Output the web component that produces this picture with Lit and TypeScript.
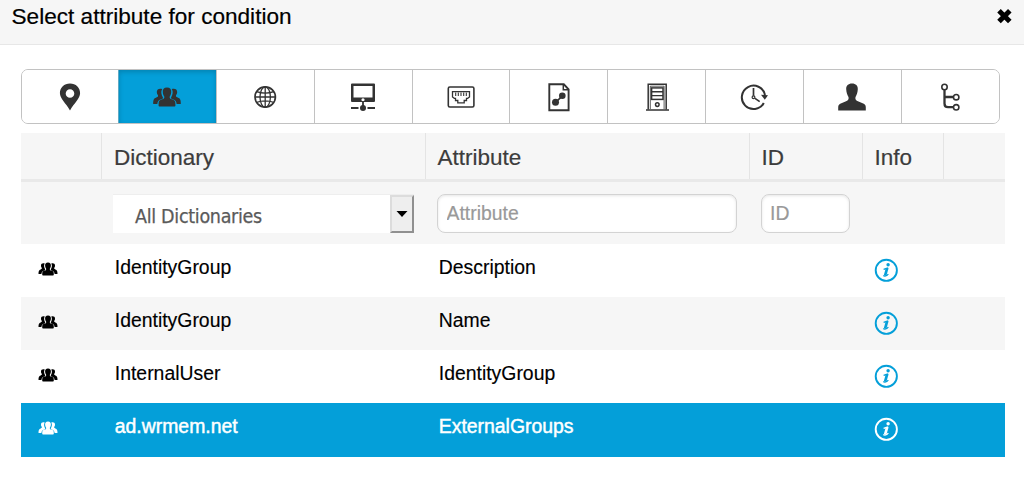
import { LitElement, html, css, svg } from "lit";
import { customElement, property, state } from "lit/decorators.js";

const GROUP = svg`
  <path d="M11.200 8C8.500 7 5.700 8 5.800 11.100c.1 1.600.5 2.400 1.200 3.200.3 1.200-.2 1.700-1.700 2.300-2.500 1-3.100 2.200-3.100 6.500h4.200c.2-2.900 1.300-4.100 4.600-5.100.9-.3 1.200-.9.8-1.700-1.500-2.700-2.200-5.700-.6-8.300z"/>
  <path d="M20.800 8c2.700-1 5.500 0 5.400 3.100-.1 1.600-.5 2.400-1.200 3.200-.3 1.200.2 1.700 1.700 2.300 2.500 1 3.100 2.200 3.100 6.500h-4.200c-.2-2.900-1.300-4.100-4.600-5.100-.9-.3-1.200-.9-.8-1.700 1.500-2.700 2.200-5.700.6-8.300z"/>
  <path d="M16 6.500c3.100 0 4.500 1.900 4.200 4.800-.2 2.100-.7 3.200-1.500 4.200-.3 1.700.3 2.300 2.200 2.800 2.700.8 3.500 1.800 3.500 4.700v1.400c0 .7-.4 1.100-1.100 1.100H8.700c-.7 0-1.100-.4-1.100-1.100V23c0-2.900.8-3.900 3.500-4.700 1.900-.5 2.500-1.100 2.200-2.800-.8-1-1.300-2.100-1.500-4.200-.3-2.900 1.100-4.800 4.200-4.800z"/>`;

const ICONS: Record<string, unknown> = {
  location: svg`<path fill-rule="evenodd" d="M16 2.500c5.800 0 10.100 4.200 10.100 9.600 0 5.800-5.900 9.900-10.100 17.400C11.800 22 5.900 17.900 5.900 12.100 5.900 6.700 10.200 2.500 16 2.500zm0 5.700a4.300 4.300 0 1 0 0 8.600 4.300 4.300 0 0 0 0-8.600z"/>`,
  group: GROUP,
  globe: svg`<g transform="translate(.6 0)" fill="none" stroke="currentColor" stroke-width="1.300">
    <circle cx="15.600" cy="16" r="10.200" stroke-width="1.700"/><ellipse cx="15.600" cy="16" rx="5.200" ry="10.200"/>
    <path d="M15.600 6v20M5.500 16h20.200M7 10.700c5 1.700 12.200 1.700 17.200 0M7 21.300c5-1.700 12.200-1.700 17.200 0"/></g>`,
  network: svg`<path fill-rule="evenodd" d="M5 2.500h22a1 1 0 0 1 1 1v16.500a1 1 0 0 1-1 1H5a1 1 0 0 1-1-1V3.500a1 1 0 0 1 1-1zM6.500 5v11.500h19V5z"/>
    <circle cx="16" cy="18.800" r="1.600" fill="#fff"/><path d="M15.100 20h1.800v5h-1.800zM4 26h7.500v1.900H4zM20.500 26H28v1.900h-7.500z"/><circle cx="16" cy="26.900" r="3"/>`,
  port: svg`<g fill="none" stroke="currentColor"><rect x="3.300" y="6" width="25.600" height="20" rx="1.500" stroke-width="1.600"/>
    <path stroke-width="1.300" d="M7.500 10.700h17v5.300l-1.800 1.300h-1.200v2.200h-2.300v2.300h-6.400v-2.300h-2.300v-2.200H9.300L7.500 16z"/><path stroke-width="1.100" d="M10.700 11.500v3.500M13.300 11.500v3.500M16 11.500v3.500M18.700 11.500v3.500M21.300 11.500v3.500"/></g>`,
  document: svg`<path fill="none" stroke="currentColor" stroke-width="1.900" d="M6.300 3.300h14.500l4.800 5v21H6.300z"/>
    <path fill="none" stroke="currentColor" stroke-width="1.500" d="M20.300 3.500v5.300h5.300"/><path stroke="currentColor" stroke-width="1.600" d="M12.500 21.300l7-6.500"/><circle cx="12.500" cy="21.300" r="3.500"/><circle cx="19.300" cy="14.700" r="3.300"/>`,
  server: svg`<g fill="none" stroke="currentColor"><path stroke-width="1.500" d="M7.200 28.500V3.300h18v25.200"/><path stroke-width=".8" d="M9.300 28V5.200h13.800V28"/>
    <rect x="10.600" y="6.900" width="11.400" height="11.500" stroke-width="1.500"/><path stroke-width="1.400" d="M10.500 10.700h11.500M10.500 14.600h11.500M5 29h23"/><circle cx="16.300" cy="23.600" r="1.800" stroke-width="1.500"/></g>`,
  clock: svg`<g fill="none" stroke="currentColor" stroke-width="2"><path d="M27 14A11.700 11.700 0 1 0 25.800 22"/><path stroke-width="1.700" d="M15.500 7v7.800M17 17.400l4.700 3.200"/><circle cx="15.500" cy="16.200" r="1.400" stroke-width="1.200"/></g>
    <path d="M23 13.700l7 .5-3.200 4.600z"/>`,
  user: svg`<path d="M16 2.500c3.800 0 6 2.200 5.800 5.800-.2 3.500-1.200 6.200-2.300 7.700-.5 2.500.3 3.400 3 4.600l5.300 2.200c1.500.7 2 2 2 3.600v3.200H2.200v-3.200c0-1.600.5-2.900 2-3.600l5.300-2.200c2.700-1.200 3.500-2.100 3-4.600-1.100-1.500-2.100-4.200-2.300-7.700-.2-3.600 2-5.800 5.800-5.800z"/>`,
  tree: svg`<g fill="none" stroke="currentColor" stroke-width="2"><path stroke-width="2.300" d="M10.500 9v13.500c0 2.500 1 3.700 3.500 3.700h5.500M10.500 16h9"/>
    <g fill="#fff" stroke-width="1.600"><circle cx="10.500" cy="6" r="2.700"/><circle cx="22.200" cy="16.200" r="2.700"/><circle cx="22.200" cy="26.300" r="2.700"/></g></g>`,
};

interface AttributeRow {
  dictionary: string;
  attribute: string;
}

@customElement("glyph-icon")
export class GlyphIcon extends LitElement {
  static styles = css`
    :host { display: block; width: 32px; height: 32px; flex: none; }
    svg { display: block; width: 100%; height: 100%; fill: currentColor; }
  `;
  @property() name = "group";
  render() {
    return html`<svg viewBox="0 0 32 32" aria-hidden="true">${ICONS[this.name]}</svg>`;
  }
}

@customElement("app-root")
export class AppRoot extends LitElement {
  static styles = css`
    :host { display: block; width: 1024px; height: 501px; overflow: hidden; background: #fff; color: #000; font-family: "Liberation Sans", Arial, sans-serif; }
    * { box-sizing: border-box; }
    .top { display: flex; justify-content: space-between; height: 45px; padding: 0 11px 0 11.500px; background: #f6f6f6; border-bottom: 1px solid #e7e7e7; }
    h1 { margin: 4px 0 0; font-size: 22.600px; line-height: 26px; font-weight: 400; -webkit-text-stroke: .2px currentColor; }
    .close { width: 17px; height: 17px; margin-top: 8px; padding: 0; border: 0; background: none; }
    .close svg { display: block; }
    .tabs { display: grid; grid-template-columns: 96px repeat(8, 97.850px) 1fr; width: 979px; height: 55px; margin: 24.400px 0 0 21px; border: 1px solid #c2c2c2; border-radius: 7px; overflow: hidden; }
    .tab { display: flex; align-items: center; justify-content: center; border: 0; border-left: 1px solid #c2c2c2; background: #fff; color: #333; padding: 0; }
    .tab:first-child { border-left: 0; }
    .tab.active { background: #049fd9; box-shadow: inset 0 2px 5px rgba(0, 0, 0, .18); border-color: #5fa9c4; }
    .table { width: 984px; margin: 8.600px 0 0 21px; }
    .row { display: grid; grid-template-columns: 80px 324px 324px 113px 81px 62px; height: 53px; font-size: 19.400px; line-height: 24px; }
    .head { height: 49px; background: #f6f6f6; border-bottom: 3px solid #e9e9e9; color: #3c3c3c; font-size: 22.500px; -webkit-text-stroke: .2px currentColor; }
    .head > div { padding: 13px 0 0 11.400px; border-left: 1px solid #e4e4e4; }
    .head > div:first-child { border: 0; }
    .head > .dictionary { padding-left: 12px; }
    .filters { height: 62px; background: #f6f6f6; }
    .filters > div { padding: 12px 12px 0 12px; }
    .filters > .id { padding: 12px 12px 0 11.500px; }
    .select { display: flex; width: 301px; height: 39px; background: #fff; border-top: 1px solid #eee; color: #5a5a5a; font: 19.500px/41px "DejaVu Sans Condensed", "DejaVu Sans", sans-serif; font-stretch: condensed; letter-spacing: -.3px; -webkit-text-stroke: .25px currentColor; }
    .label { flex: 1; padding: 1px 0 0 22px; }
    .drop { display: flex; align-items: center; justify-content: center; width: 24px; height: 38px; background: #eee; border: 2px solid; border-color: #dcdcdc #909090 #909090 #dcdcdc; }
    .field { display: block; width: 100%; height: 39px; padding: 1px 8.500px 0; border: 1px solid #d3d3d3; border-radius: 8px; background: #fff; box-shadow: inset 0 1px 3px rgba(0, 0, 0, .1); font: 19.400px "Liberation Sans", Arial, sans-serif; outline: 0; }
    .field::placeholder { color: #999; opacity: 1; -webkit-text-stroke: .2px #999; }
    .data { -webkit-text-stroke: .15px currentColor; }
    .data:nth-child(even) { background: #f6f6f6; }
    .data.selected { background: #049fd9; color: #fff; height: 54px; -webkit-text-stroke: .45px currentColor; }
    .data > div { padding: 11px 0 0 13.800px; }
    .data > .kind { padding: 14px 0 0 15.500px; }
    .kind glyph-icon { width: 22px; height: 22px; }
    .data > .info { padding: 14px 0 0 12px; color: #049fd9; }
    .selected > .info { color: #fff; }
    .info svg { display: block; }
  `;

  @state() private activeTab = "group";
  @state() private selected = 3;
  private rows: AttributeRow[] = [
    { dictionary: "IdentityGroup", attribute: "Description" },
    { dictionary: "IdentityGroup", attribute: "Name" },
    { dictionary: "InternalUser", attribute: "IdentityGroup" },
    { dictionary: "ad.wrmem.net", attribute: "ExternalGroups" },
  ];

  render() {
    return html`
      <header class="top">
        <h1>Select attribute for condition</h1>
        <button class="close" aria-label="Close"><svg width="17" height="17" viewBox="0 0 17 17"><path d="M3 2.800l10.800 10.800M13.800 2.800L3 13.600" stroke="#000" stroke-width="5"/></svg></button>
      </header>
      <nav class="tabs">
        ${Object.keys(ICONS).map((name) => html`<button class="tab ${name === this.activeTab ? "active" : ""}" @click=${() => (this.activeTab = name)}><glyph-icon .name=${name}></glyph-icon></button>`)}
      </nav>
      <main class="table">
        <div class="row head"><div></div><div class="dictionary">Dictionary</div><div>Attribute</div><div>ID</div><div>Info</div><div></div></div>
        <div class="row filters">
          <div></div>
          <div><div class="select"><span class="label">All Dictionaries</span><span class="drop"><svg width="12" height="6" viewBox="0 0 12 6"><path d="M.5 0h11L6 6z"/></svg></span></div></div>
          <div><input class="field" placeholder="Attribute"></div>
          <div class="id"><input class="field" placeholder="ID"></div>
          <div></div><div></div>
        </div>
        <section>
          ${this.rows.map((row, i) => html`<div class="row data ${i === this.selected ? "selected" : ""}" @click=${() => (this.selected = i)}>
            <div class="kind"><glyph-icon name="group"></glyph-icon></div>
            <div>${row.dictionary}</div><div>${row.attribute}</div><div></div>
            <div class="info"><svg width="24" height="24" viewBox="0 0 24 24" fill="none" stroke="currentColor"><circle cx="12.300" cy="12.300" r="10.600" stroke-width="1.900"/><circle cx="14.100" cy="6.800" r="1.700" fill="currentColor" stroke="none"/><path d="M13.200 10.100L11.100 17.500" stroke-width="2.700"/><path d="M9.600 11.300l4.600-1.300M9.300 17.500c1.300 1.200 3.600.6 5-1.500" stroke-width="1.300"/></svg></div>
            <div></div>
          </div>`)}
        </section>
      </main>`;
  }
}
